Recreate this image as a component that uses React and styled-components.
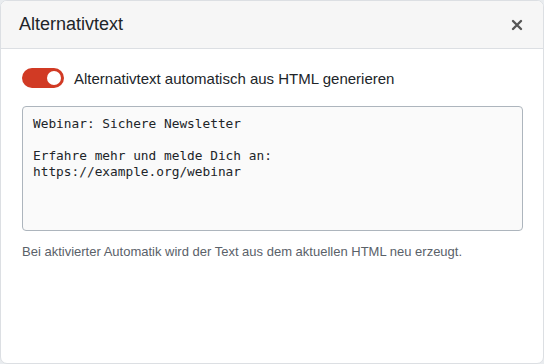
import React, {useState} from 'react'
import styled, {createGlobalStyle} from 'styled-components';

const GlobalStyle = createGlobalStyle`
    html, body {
        margin: 0;
        padding: 0;
        background: #e9ecef;
    }
    body {
        font-family: "Liberation Sans", Arial, sans-serif;
    }
`

const StyledDialog = styled.div`
    box-sizing: border-box;
    width: 544px;
    height: 364px;
    background: #fff;
    border: 1px solid #dcdfe3;
    border-radius: 7px;
    overflow: hidden;
    display: flex;
    flex-direction: column;
`
const StyledHeader = styled.div`
    height: 47px;
    display: flex;
    align-items: center;
    justify-content: space-between;
    padding: 0 18px 0 18px;
    background: #f6f6f6;
    border-bottom: 1px solid #dcdfe3;
`
const StyledTitle = styled.h2`
    margin: 0;
    font-size: 18px;
    font-weight: 400;
    color: #212529;
`
const StyledClose = styled.button`
    border: 0;
    background: none;
    padding: 0;
    width: 16px;
    height: 16px;
    display: flex;
    align-items: center;
    justify-content: center;
    cursor: pointer;
`
const StyledBody = styled.div`
    padding: 19px 21px 0 21px;
    display: flex;
    flex-direction: column;
`
const StyledSwitchRow = styled.label`
    display: flex;
    align-items: center;
    gap: 10px;
    font-size: 15px;
    color: #212529;
    margin-bottom: 18px;
`
const StyledSwitch = styled.span`
    position: relative;
    width: 42px;
    height: 20px;
    border-radius: 10px;
    background: ${props => props.$on ? '#d13a24' : '#ced4da'};
    flex-shrink: 0;

    &::after{
        content: '';
        position: absolute;
        top: 3px;
        left: ${props => props.$on ? '25px' : '3px'};
        width: 14px;
        height: 14px;
        border-radius: 50%;
        background: #fff;
    }
`
const StyledTextArea = styled.textarea`
    box-sizing: border-box;
    width: 501px;
    height: 125px;
    margin: 0;
    padding: 9px 10px;
    resize: none;
    border: 1px solid #adb5bd;
    border-radius: 4px;
    background: #fafafa;
    color: #212529;
    font-family: "DejaVu Sans Mono", monospace;
    font-size: 12.8px;
    line-height: 16px;
    outline: none;
`
const StyledHelp = styled.p`
    margin: 13px 0 0 0;
    font-size: 13px;
    color: #5a6169;
`

const initialText = `Webinar: Sichere Newsletter

Erfahre mehr und melde Dich an:
https://example.org/webinar`

const App = () => {
    const [auto, setAuto] = useState(true);
    const [text, setText] = useState(initialText);

    return(
        <>
        <GlobalStyle/>
        <StyledDialog>
            <StyledHeader>
                <StyledTitle>Alternativtext</StyledTitle>
                <StyledClose aria-label="Schließen">
                    <svg width="12" height="12" viewBox="0 0 12 12">
                        <path d="M2 2 L10 10 M10 2 L2 10" stroke="#555" strokeWidth="2.4" strokeLinecap="round"/>
                    </svg>
                </StyledClose>
            </StyledHeader>
            <StyledBody>
                <StyledSwitchRow onClick={() => setAuto(!auto)}>
                    <StyledSwitch $on={auto}/>
                    Alternativtext automatisch aus HTML generieren
                </StyledSwitchRow>
                <StyledTextArea value={text} onChange={e => setText(e.target.value)}/>
                <StyledHelp>Bei aktivierter Automatik wird der Text aus dem aktuellen HTML neu erzeugt.</StyledHelp>
            </StyledBody>
        </StyledDialog>
        </>
    )
}
export default App;
